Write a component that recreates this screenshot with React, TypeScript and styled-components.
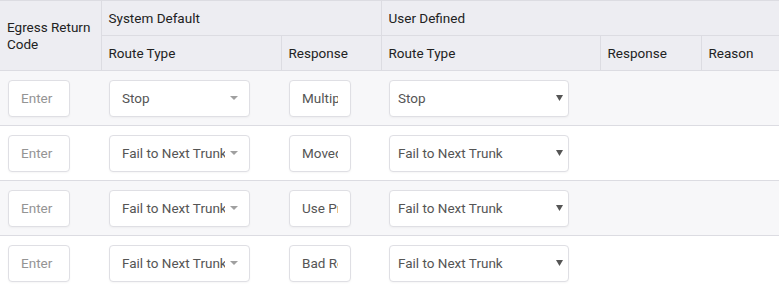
import React from "react";
import styled, { createGlobalStyle } from "styled-components";

const GlobalStyle = createGlobalStyle`
  html, body {
    margin: 0;
    padding: 0;
    background: #ffffff;
    overflow: hidden;
  }
  body {
    font-family: Roboto, "Liberation Sans", Arial, sans-serif;
  }
`;

const Table = styled.table`
  border-collapse: collapse;
  table-layout: fixed;
  width: 880px;
  font-family: Roboto, "Liberation Sans", Arial, sans-serif;
`;

const Th = styled.th<{ $first?: boolean }>`
  background: #ededf2;
  border: 1px solid #dcdce2;
  border-left: ${(p) => (p.$first ? "none" : "1px solid #dcdce2")};
  height: 35px;
  padding: 0 7px;
  box-sizing: border-box;
  text-align: left;
  vertical-align: middle;
  font-weight: 400;
  font-size: 13.5px;
  line-height: 17px;
  color: #222;
  white-space: normal;
`;

const Row = styled.tr<{ $striped: boolean }>`
  background: ${(p) => (p.$striped ? "#f7f7f9" : "#ffffff")};
  border-bottom: 1px solid #dcdce2;
`;

const Td = styled.td`
  height: 55px;
  padding: 0 8px;
  box-sizing: border-box;
  vertical-align: middle;
`;

const Field = styled.div<{ $w: number }>`
  width: ${(p) => p.$w}px;
  height: 37px;
  box-sizing: border-box;
  background: #ffffff;
  border: 1px solid #dfdfe4;
  border-radius: 4px;
  box-shadow: 0 1px 2px rgba(0, 0, 0, 0.04);
  display: flex;
  align-items: center;
  font-size: 13.5px;
  color: #555;
  overflow: hidden;
  white-space: nowrap;
`;

const InputText = styled.span<{ $placeholder?: boolean }>`
  display: block;
  flex: 1;
  min-width: 0;
  margin: 0 12px;
  overflow: hidden;
  color: ${(p) => (p.$placeholder ? "#949494" : "#555")};
`;

const SelectText = styled.span<{ $pad: number; $gap: number }>`
  display: block;
  flex: 1;
  min-width: 0;
  margin-left: ${(p) => p.$pad}px;
  margin-right: ${(p) => p.$gap}px;
  overflow: hidden;
  color: #555;
`;

const Caret = styled.svg<{ $right: number }>`
  flex: none;
  margin-right: ${(p) => p.$right}px;
`;

function SoftCaret() {
  return (
    <Caret $right={11} width="8" height="4" viewBox="0 0 8 4">
      <path d="M0 0h8L4 4z" fill="#a0a0a0" />
    </Caret>
  );
}

function NativeCaret() {
  return (
    <Caret $right={5} width="7" height="6" viewBox="0 0 7 6">
      <path d="M0 0h7L3.5 6z" fill="#555" />
    </Caret>
  );
}

const rows = [
  { route: "Stop", response: "Multiple Choices" },
  { route: "Fail to Next Trunk", response: "Moved Permanently" },
  { route: "Fail to Next Trunk", response: "Use Proxy" },
  { route: "Fail to Next Trunk", response: "Bad Request" },
];

export default function App() {
  return (
    <>
      <GlobalStyle />
      <Table>
        <colgroup>
          <col style={{ width: 101 }} />
          <col style={{ width: 180 }} />
          <col style={{ width: 100 }} />
          <col style={{ width: 219 }} />
          <col style={{ width: 101 }} />
          <col />
        </colgroup>
        <thead>
          <tr>
            <Th $first rowSpan={2}>Egress Return Code</Th>
            <Th colSpan={2}>System Default</Th>
            <Th colSpan={3}>User Defined</Th>
          </tr>
          <tr>
            <Th>Route Type</Th>
            <Th>Response</Th>
            <Th>Route Type</Th>
            <Th>Response</Th>
            <Th>Reason</Th>
          </tr>
        </thead>
        <tbody>
          {rows.map((r, i) => (
            <Row key={i} $striped={i % 2 === 0}>
              <Td>
                <Field $w={62}>
                  <InputText $placeholder>Enter</InputText>
                </Field>
              </Td>
              <Td>
                <Field $w={141}>
                  <SelectText $pad={12} $gap={5}>{r.route}</SelectText>
                  <SoftCaret />
                </Field>
              </Td>
              <Td>
                <Field $w={62}>
                  <InputText>{r.response}</InputText>
                </Field>
              </Td>
              <Td>
                <Field $w={180}>
                  <SelectText $pad={8} $gap={4}>{r.route}</SelectText>
                  <NativeCaret />
                </Field>
              </Td>
              <Td />
              <Td />
            </Row>
          ))}
        </tbody>
      </Table>
    </>
  );
}
